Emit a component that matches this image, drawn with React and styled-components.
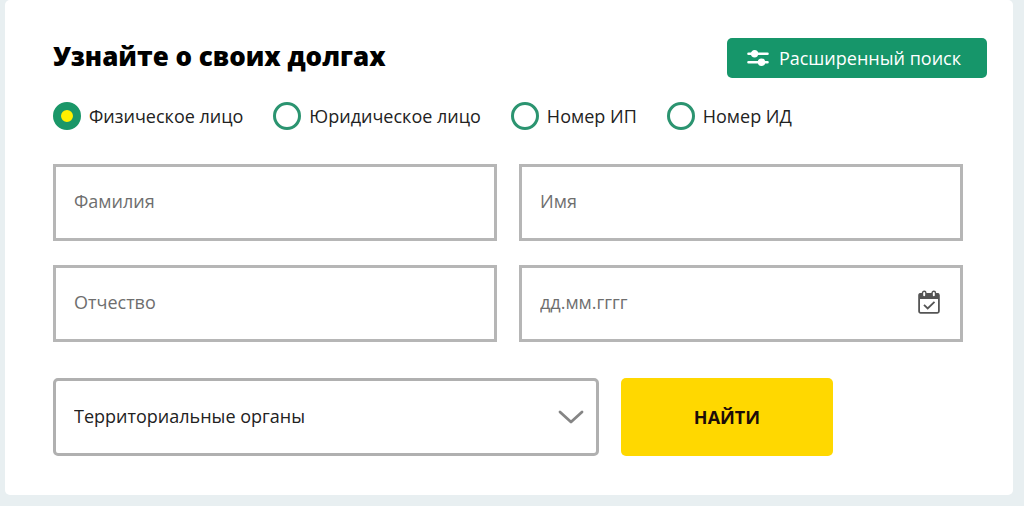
import React from "react";
import styled, { createGlobalStyle } from "styled-components";

const GlobalStyle = createGlobalStyle`
  *, *::before, *::after { box-sizing: border-box; }
  body {
    margin: 0;
    background: #e8eff1;
    color: #222;
    font-family: "Open Sans", "Noto Sans", sans-serif;
    font-size: 18px;
    line-height: 24px;
  }
  button, input, select { font: inherit; color: inherit; }
`;

const Card = styled.main`
  margin: 0 11px 12px 5px;
  padding: 38px 26px 39px 48px;
  background: #fff;
  border-radius: 5px;
`;

const Header = styled.header`
  display: flex;
  justify-content: space-between;
  align-items: flex-start;
  height: 40px;
`;

const Title = styled.h1`
  margin: 0;
  color: #000;
  font-size: 26px;
  font-weight: 800;
  line-height: 36px;
`;

const AdvancedButton = styled.button`
  display: flex;
  align-items: center;
  gap: 10px;
  height: 40px;
  padding: 0 26px 0 20px;
  border: 0;
  border-radius: 5px;
  background: #16966a;
  color: #fff;
`;

const Form = styled.form`
  margin-right: 24px;
`;

const Kinds = styled.fieldset`
  display: flex;
  flex-wrap: wrap;
  gap: 12px 30px;
  margin: 24px 0 34px;
  padding: 0;
  border: 0;
`;

const Kind = styled.label`
  display: flex;
  align-items: center;
  gap: 8px;
  white-space: nowrap;
`;

const Radio = styled.input`
  appearance: none;
  width: 28px;
  height: 28px;
  margin: 0;
  border: 3px solid #2b9470;
  border-radius: 50%;
  background: #fff;

  &:checked {
    border: 8px solid #1a9768;
    background: #fff000;
  }
`;

const Fields = styled.div`
  display: grid;
  grid-template-columns: 1fr 1fr;
  gap: 24px 22px;
`;

const Field = styled.div`
  display: flex;
  align-items: center;
  height: 77px;
  padding: 0 20px 4px 18px;
  border: 3px solid #b6b6b6;
`;

const TextInput = styled.input`
  flex: 1;
  min-width: 0;
  height: 100%;
  padding: 0;
  border: 0;
  outline: 0;
  background: none;

  &::placeholder { color: #6e6e6e; opacity: 1; }
`;

const IconButton = styled.button`
  display: flex;
  padding: 0;
  border: 0;
  background: none;
`;

const Actions = styled.div`
  display: flex;
  gap: 22px;
  margin-top: 36px;
`;

const SelectBox = styled.div`
  display: grid;
  flex: 0 0 60%;
  align-items: center;

  & > * { grid-area: 1 / 1; }
  & > svg { justify-self: end; margin-right: 15px; pointer-events: none; }
`;

const Select = styled.select`
  appearance: none;
  width: 100%;
  height: 78px;
  padding: 0 56px 2px 18px;
  border: 3px solid #b0b0b0;
  border-radius: 5px;
  background: #fff;
`;

const SubmitButton = styled.button`
  width: 212px;
  height: 78px;
  border: 0;
  border-radius: 5px;
  background: #ffd800;
  color: #1c0c08;
  font-weight: 700;
`;

const SlidersIcon = () => (
  <svg width="22" height="18" viewBox="0 0 22 18" fill="none" stroke="#fff" strokeWidth="2.6" strokeLinecap="round" aria-hidden="true">
    <path d="M1.5 4.8h19M1.5 13.2h19" />
    <circle cx="7.5" cy="4.8" r="2.4" fill="#fff" />
    <circle cx="14.5" cy="13.2" r="2.4" fill="#fff" />
  </svg>
);

const CalendarIcon = () => (
  <svg width="22" height="24" viewBox="0 0 22 24" fill="none" aria-hidden="true">
    <path d="M2.5 3h17A1.5 1.5 0 0 1 21 4.5V9H1V4.5A1.5 1.5 0 0 1 2.5 3z" fill="#555" />
    <rect x="1.1" y="3.8" width="19.8" height="19" rx="1.5" stroke="#555" strokeWidth="1.8" />
    <rect x="4.5" y="1.2" width="3.4" height="5.8" rx="1.7" fill="#fff" stroke="#555" strokeWidth="1.4" />
    <rect x="14.1" y="1.2" width="3.4" height="5.8" rx="1.7" fill="#fff" stroke="#555" strokeWidth="1.4" />
    <path d="M6 14.8l3.7 3.7 6.8-6.6" stroke="#555" strokeWidth="1.8" />
  </svg>
);

const ChevronIcon = () => (
  <svg width="26" height="14" viewBox="0 0 26 14" fill="none" stroke="#858585" strokeWidth="2.8" strokeLinecap="round" strokeLinejoin="round" aria-hidden="true">
    <path d="M2 2l11 10L24 2" />
  </svg>
);

const kinds = ["Физическое лицо", "Юридическое лицо", "Номер ИП", "Номер ИД"];

export default function App() {
  return (
    <>
      <GlobalStyle />
      <Card>
        <Header>
          <Title>Узнайте о своих долгах</Title>
          <AdvancedButton type="button">
            <SlidersIcon />
            Расширенный поиск
          </AdvancedButton>
        </Header>
        <Form onSubmit={(event) => event.preventDefault()}>
          <Kinds>
            {kinds.map((kind, index) => (
              <Kind key={kind}>
                <Radio type="radio" name="kind" value={kind} defaultChecked={index === 0} />
                {kind}
              </Kind>
            ))}
          </Kinds>
          <Fields>
            <Field>
              <TextInput placeholder="Фамилия" aria-label="Фамилия" />
            </Field>
            <Field>
              <TextInput placeholder="Имя" aria-label="Имя" />
            </Field>
            <Field>
              <TextInput placeholder="Отчество" aria-label="Отчество" />
            </Field>
            <Field>
              <TextInput placeholder="дд.мм.гггг" aria-label="дд.мм.гггг" />
              <IconButton type="button" aria-label="Календарь">
                <CalendarIcon />
              </IconButton>
            </Field>
          </Fields>
          <Actions>
            <SelectBox>
              <Select aria-label="Территориальные органы">
                <option>Территориальные органы</option>
              </Select>
              <ChevronIcon />
            </SelectBox>
            <SubmitButton type="submit">НАЙТИ</SubmitButton>
          </Actions>
        </Form>
      </Card>
    </>
  );
}
